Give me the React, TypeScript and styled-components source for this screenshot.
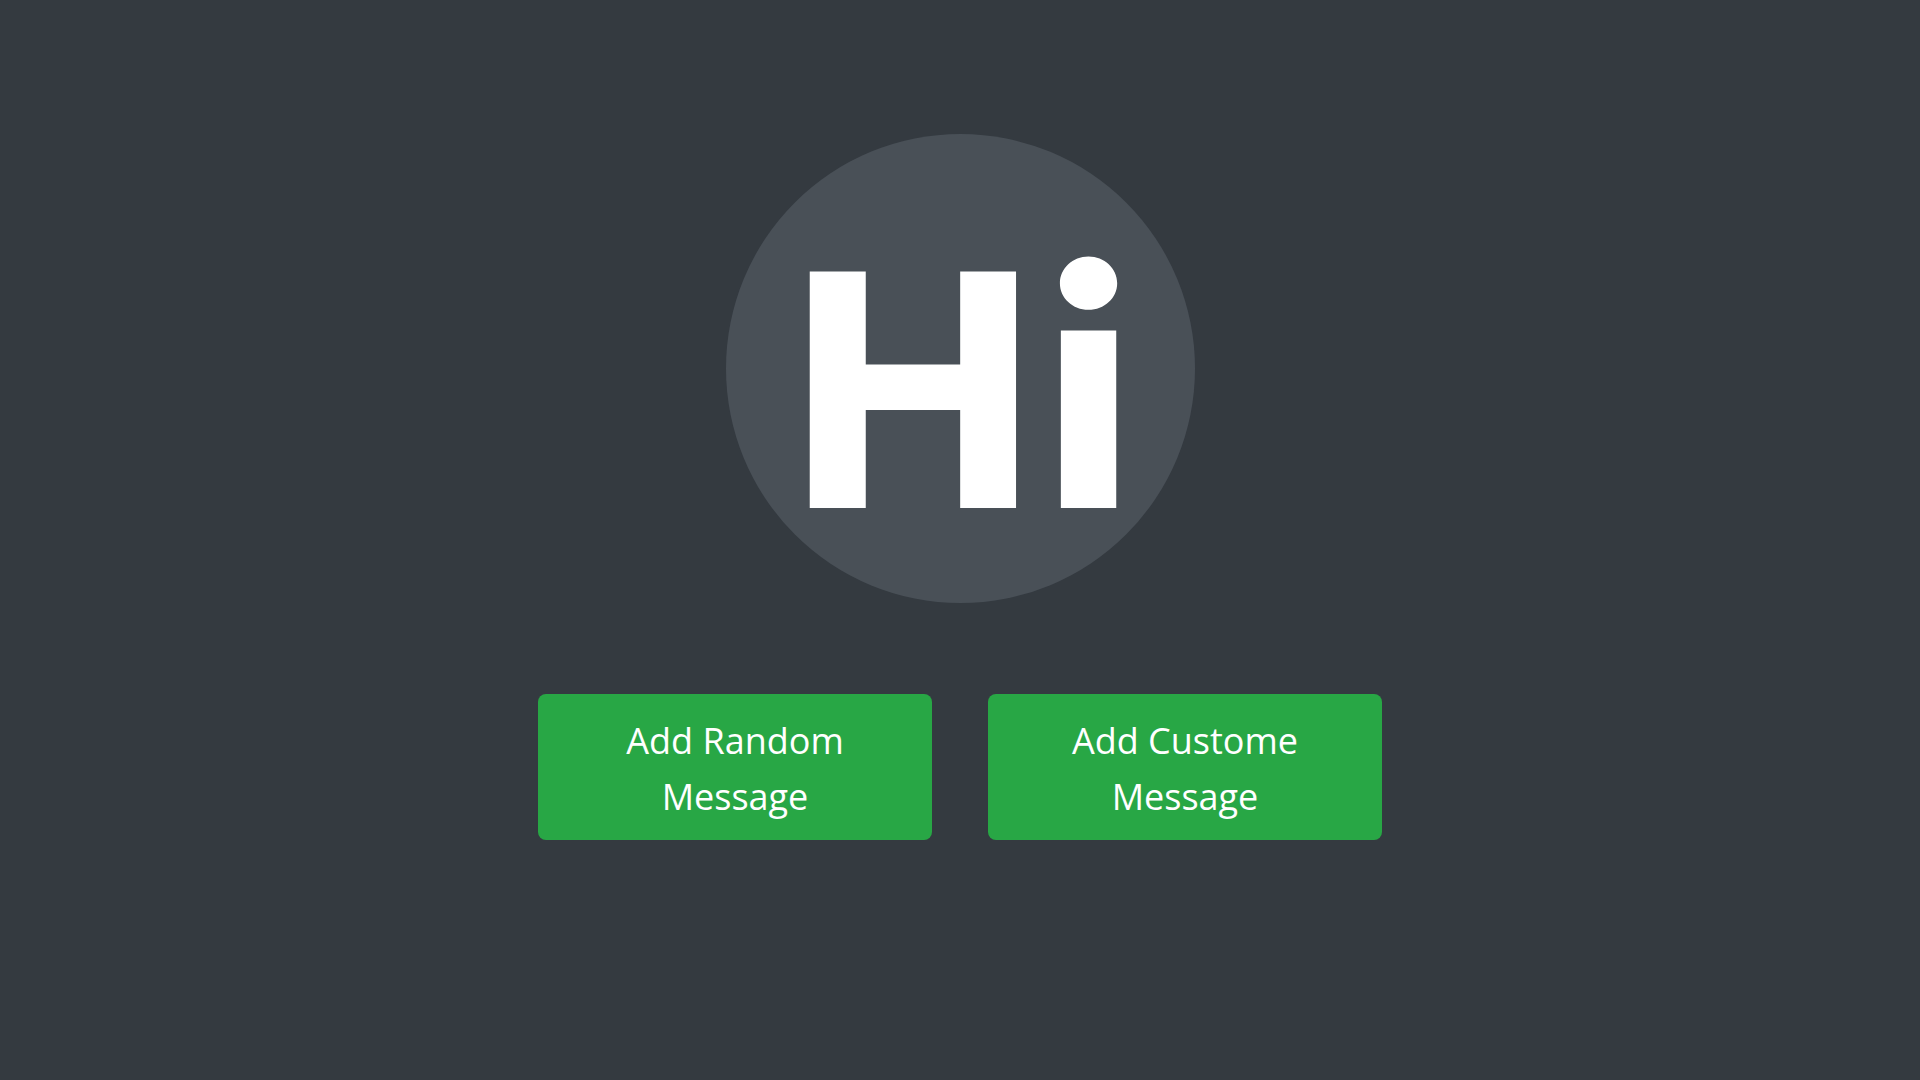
import React from "react";
import styled, { createGlobalStyle } from "styled-components";

const Global = createGlobalStyle`
  html, body {
    margin: 0;
    padding: 0;
    background: #343a40;
  }
  body {
    font-family: "Open Sans", "Noto Sans", "Liberation Sans", sans-serif;
  }
`;

const Page = styled.main`
  min-height: 1080px;
  box-sizing: border-box;
  padding-top: 134px;
  display: flex;
  flex-direction: column;
  align-items: center;
  background: #343a40;
`;

const Avatar = styled.div`
  width: 469px;
  height: 469px;
  border-radius: 50%;
  background: #495057;
  display: flex;
  align-items: center;
  justify-content: center;
`;

const Greeting = styled.span`
  font-family: Inter, "Noto Sans", sans-serif;
  font-weight: 800;
  font-size: 325px;
  line-height: 1;
  color: #ffffff;
  letter-spacing: 8px;
  padding-left: 14px;
  padding-top: 42px;
`;

const Actions = styled.div`
  margin-top: 91px;
  display: flex;
  gap: 56px;
`;

const ActionButton = styled.button`
  width: 394px;
  height: 146px;
  box-sizing: border-box;
  padding: 19px 24px 15px;
  border: none;
  border-radius: 8px;
  background: #28a745;
  color: #ffffff;
  font-family: "Open Sans", "Noto Sans", sans-serif;
  font-size: 36px;
  line-height: 56px;
  text-align: center;
  cursor: pointer;
`;

export default function App() {
  return (
    <>
      <Global />
      <Page>
        <Avatar>
          <Greeting>Hi</Greeting>
        </Avatar>
        <Actions>
          <ActionButton>Add Random Message</ActionButton>
          <ActionButton>Add Custome Message</ActionButton>
        </Actions>
      </Page>
    </>
  );
}
